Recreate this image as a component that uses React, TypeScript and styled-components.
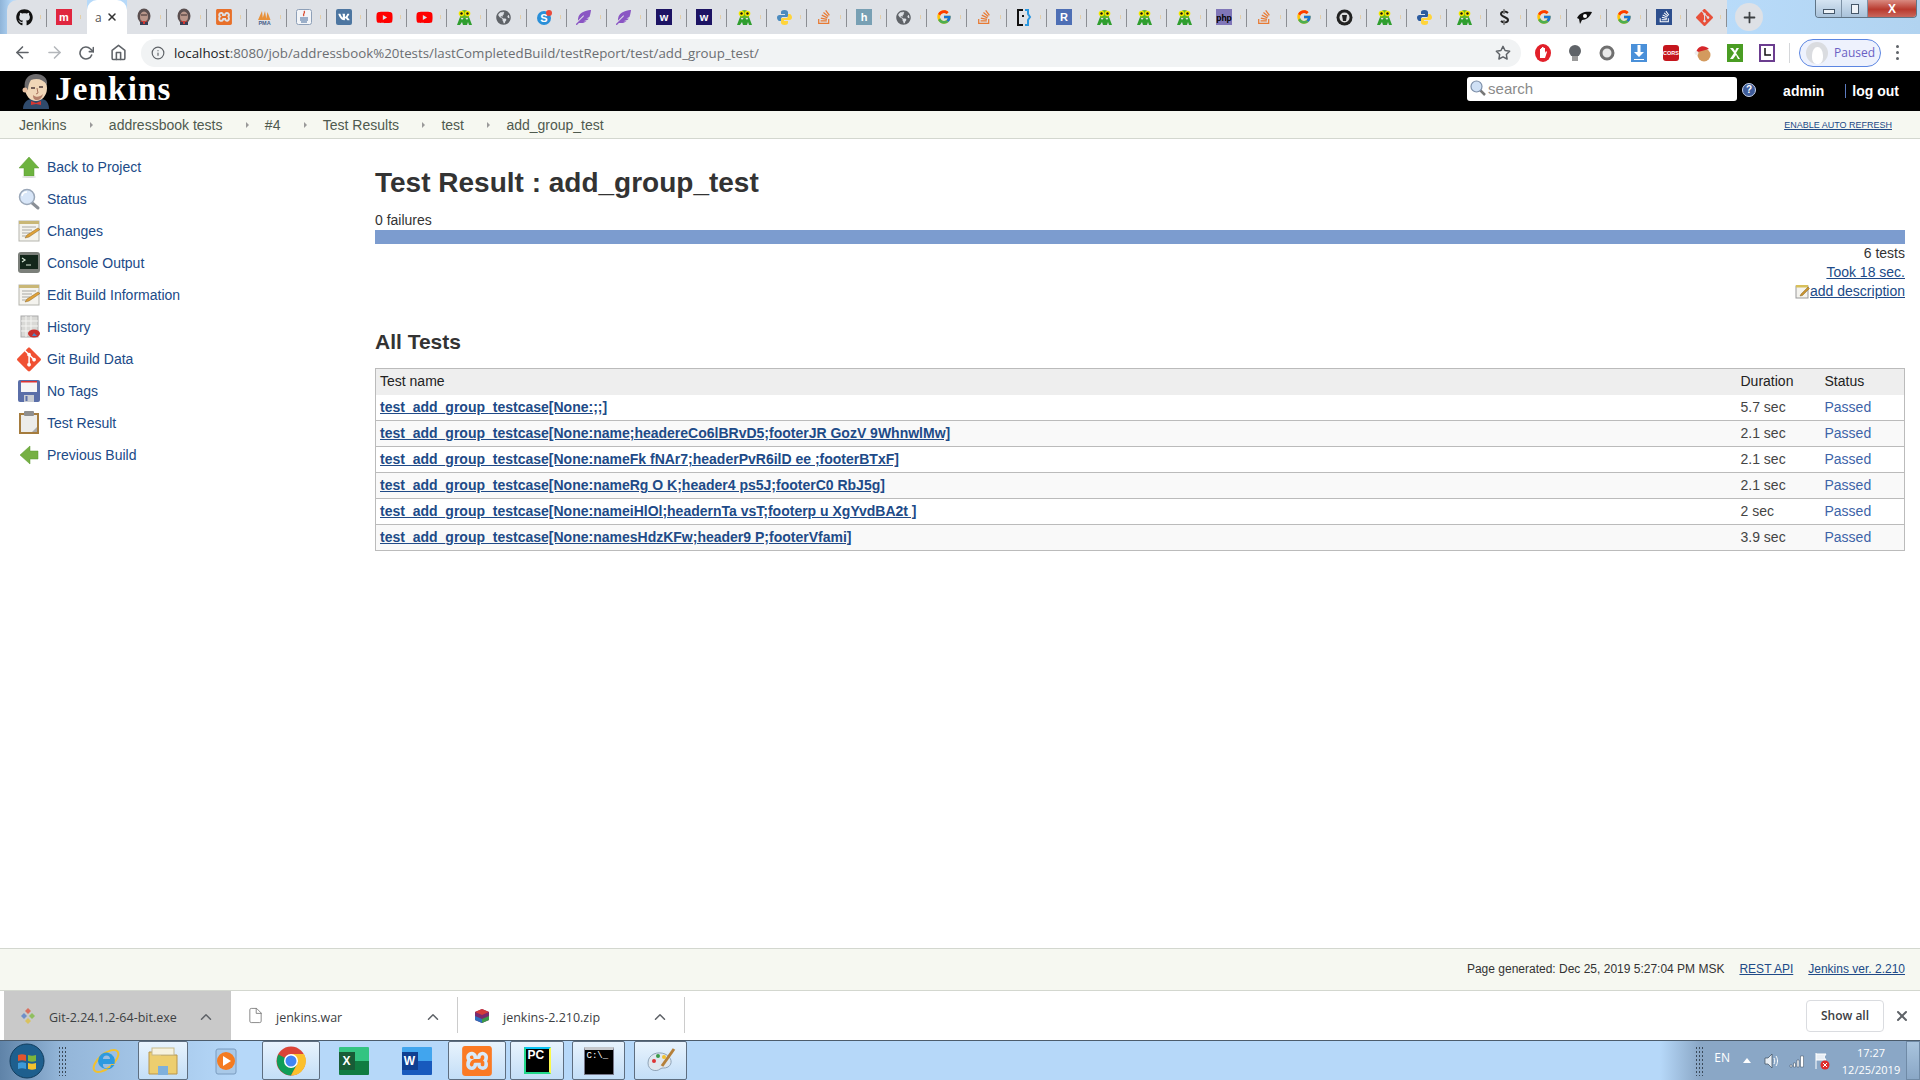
import React from 'react';
import styled, { createGlobalStyle } from 'styled-components';
import { FaGithub, FaVk, FaYoutube, FaStackOverflow, FaGlobeAmericas, FaFeatherAlt } from 'react-icons/fa';
import { FcGoogle } from 'react-icons/fc';
import { SiGit, SiXampp } from 'react-icons/si';
import { FiArrowLeft, FiArrowRight, FiRotateCw, FiHome, FiInfo, FiStar, FiX, FiChevronUp, FiPlus, FiFile } from 'react-icons/fi';

const GlobalStyle = createGlobalStyle`
  html, body {
    margin: 0;
    padding: 0;
    background: #fff;
  }
  body {
    font-family: "Liberation Sans", Arial, sans-serif;
    font-size: 14px;
    color: #333;
  }
  * { box-sizing: border-box; }
`;

const Screen = styled.div`
  width: 1920px;
  height: 1080px;
  display: flex;
  flex-direction: column;
  overflow: hidden;
`;

// Browser chrome
const TabStrip = styled.div`
  height: 34px;
  flex: none;
  display: flex;
  padding-left: 7px;
  background: linear-gradient(90deg, #8fb4d8 0, #b6d9f9 12px, #b9dcfb 1700px, #b1d3f0 100%);
`;

const Tab = styled.div<{ $active?: boolean }>`
  position: relative;
  width: 40px;
  height: 34px;
  flex: none;
  display: flex;
  align-items: center;
  padding-left: ${p => (p.$active ? '8px' : '9px')};
  background: ${p => (p.$active ? '#fff' : '#dee1e6')};
  border-radius: ${p => (p.$active ? '10px 10px 0 0' : '0')};
  font-family: "Open Sans", sans-serif;
  font-size: 12px;
  color: #555;

  &:first-child { border-radius: 10px 0 0 0; }

  &:not(:first-child):last-of-type { border-radius: 0 10px 0 0; }
`;

const TabDivider = styled.span`
  position: absolute;
  right: 0;
  top: 9px;
  width: 1px;
  height: 18px;
  background: #8b8e93;
`;

const TabFade = styled.span`
  position: absolute;
  left: 33px;
  top: 15px;
  width: 1px;
  height: 4px;
  background: #e3cfa8;
`;

const TabClose = styled.span`
  display: flex;
  margin-left: 4px;
  color: #333;
`;

const NewTab = styled.div`
  width: 28px;
  height: 28px;
  margin: 3px 0 0 8px;
  border-radius: 50%;
  background: #dee1e6;
  display: flex;
  align-items: center;
  justify-content: center;
  color: #3c4043;
`;

const WindowControls = styled.div`
  margin-left: auto;
  margin-right: 3px;
  width: 102px;
  height: 18px;
  display: flex;
  border: 1px solid #5f7486;
  border-top: none;
  border-radius: 0 0 4px 4px;
  overflow: hidden;
`;

const WindowButton = styled.div<{ $close?: boolean; $w: number }>`
  width: ${p => p.$w}px;
  display: flex;
  align-items: center;
  justify-content: center;
  color: ${p => (p.$close ? '#fff' : '#39485a')};
  background: ${p => (p.$close ? 'linear-gradient(#d98a80, #b93a2e 55%, #c9675c)' : 'linear-gradient(#d5e4f2, #a9c2da)')};
  border-right: 1px solid #7d91a5;
  font-size: 12px;
  font-weight: 700;

  &:last-child { border-right: none; }
`;

const MinGlyph = styled.span`
  width: 12px;
  height: 5px;
  margin-top: 5px;
  background: #eef3f8;
  border: 1px solid #46586a;
`;

const RestoreGlyph = styled.span`
  position: relative;
  width: 8px;
  height: 10px;
  background: #eef3f8;
  border: 1px solid #46586a;

  &::before {
    content: '';
    position: absolute;
    left: 1px;
    top: -3px;
    width: 8px;
    height: 9px;
    border: 1px solid #46586a;
    z-index: -1;
  }
`;

const Toolbar = styled.div`
  height: 37px;
  flex: none;
  display: flex;
  align-items: center;
  background: #fff;
  position: relative;
`;

const NavButton = styled.div<{ $muted?: boolean; $w: number }>`
  width: ${p => p.$w}px;
  flex: none;
  display: flex;
  justify-content: center;
  color: ${p => (p.$muted ? '#b4b7bb' : '#5f6368')};
`;

const Omnibox = styled.div`
  width: 1380px;
  height: 28px;
  margin-left: 13px;
  flex: none;
  display: flex;
  align-items: center;
  padding: 0 10px 0 10px;
  background: #f1f3f4;
  border-radius: 14px;
  color: #5f6368;
`;

const UrlText = styled.span`
  margin-left: 9px;
  font-family: "Open Sans", sans-serif;
  font-size: 13.3px;
  color: #6b6e72;

  b {
    font-weight: 400;
    color: #202124;
  }
`;

const StarSlot = styled.span`
  margin-left: auto;
  display: flex;
  color: #5f6368;
`;

const Extensions = styled.div`
  display: flex;
  margin-left: 6px;
  flex: none;
`;

const ExtSlot = styled.div`
  width: 32px;
  display: flex;
  justify-content: center;
  align-items: center;
`;

const CorsBadge = styled.div`
  width: 16px;
  height: 16px;
  border-radius: 3px;
  background: #c5161d;
  color: #fff;
  font-size: 5.5px;
  font-weight: 700;
  display: flex;
  align-items: center;
  justify-content: center;
`;

const ToolbarSep = styled.div`
  width: 1px;
  height: 20px;
  background: #d5d7da;
  margin-left: 6px;
`;

const ProfilePill = styled.div`
  width: 82px;
  height: 28px;
  margin-left: 9px;
  border: 1px solid #5c86e2;
  border-radius: 14px;
  background: #eef2fd;
  display: flex;
  align-items: center;
  padding-left: 6px;
  font-family: "Open Sans", sans-serif;
  font-size: 12px;
  color: #6b61c4;
`;

const Avatar = styled.div`
  width: 22px;
  height: 22px;
  border-radius: 50%;
  background: #dadce0;
  margin-right: 6px;
  display: flex;
  justify-content: center;
  align-items: flex-end;

  &::after {
    content: '';
    width: 11px;
    height: 17px;
    border-radius: 50% 50% 40% 40%;
    background: #fff;
  }
`;

const MenuDots = styled.div`
  margin-left: 15px;
  display: flex;
  flex-direction: column;
  gap: 3px;

  span {
    width: 3px;
    height: 3px;
    border-radius: 50%;
    background: #5f6368;
  }
`;

// Jenkins page
const PageHeader = styled.header`
  height: 40px;
  flex: none;
  display: flex;
  align-items: center;
  background: #000;
  color: #fff;
  padding-left: 18px;
`;

const Logo = styled.div`
  display: flex;
  align-items: center;
  height: 40px;
`;

const LogoText = styled.span`
  font-family: "Liberation Serif", serif;
  font-weight: 700;
  font-size: 33px;
  margin-left: 1px;
  margin-top: -3px;
  letter-spacing: 1.2px;
`;

const SearchBox = styled.div`
  margin-left: auto;
  width: 270px;
  height: 24px;
  background: #fff;
  border-radius: 3px;
  display: flex;
  align-items: center;
  padding: 0 0 2px 3px;
  margin-top: -4px;
  color: #8a8a8a;
  font-size: 15px;
  gap: 2px;
`;

const HelpDot = styled.div`
  width: 14px;
  height: 14px;
  margin-left: 5px;
  margin-top: -3px;
  border-radius: 50%;
  background: #3e5c9a;
  border: 1px solid #c9d4ea;
  color: #fff;
  font-size: 10px;
  font-weight: 700;
  display: flex;
  align-items: center;
  justify-content: center;
`;

const HeaderLink = styled.span`
  font-weight: 700;
  font-size: 14px;
  color: #fff;
`;

const AdminLink = styled(HeaderLink)`
  margin-left: 27px;
`;

const LogoutBar = styled.span`
  display: flex;
  align-items: center;
  margin: 0 21px 0 21px;
  gap: 6px;

  &::before {
    content: '';
    width: 1px;
    height: 14px;
    background: #5c7bc0;
  }
`;

const Breadcrumbs = styled.nav`
  height: 28px;
  flex: none;
  display: flex;
  align-items: center;
  padding: 0 28px 0 19px;
  background: #f6f8f1;
  border-bottom: 1px solid #d3d7cf;
  color: #4f5a4f;
`;

const Crumb = styled.span`
  display: flex;
  align-items: center;
`;

const CrumbArrow = styled.span`
  width: 0;
  height: 0;
  margin: 0 16.2px 0 23.2px;
  border-left: 3px solid #9a9a9a;
  border-top: 3px solid transparent;
  border-bottom: 3px solid transparent;
`;

const AutoRefresh = styled.a`
  margin-left: auto;
  color: #204a87;
  font-size: 9px;
  text-decoration: underline;
  text-transform: uppercase;
`;

const Main = styled.div`
  flex: 1;
  display: flex;
  min-height: 0;
`;

const Sidebar = styled.aside`
  width: 375px;
  flex: none;
  padding: 12px 0 0 17px;
`;

const SideItem = styled.a`
  height: 32px;
  display: flex;
  align-items: center;
  gap: 6px;
  color: #204a87;
`;

const SideIcon = styled.span`
  width: 24px;
  height: 24px;
  display: flex;
  align-items: center;
  justify-content: center;
`;

const Content = styled.main`
  flex: 1;
  min-width: 0;
  padding: 0 15px 0 0;
`;

const Title = styled.h1`
  margin: 26px 0 0;
  font-size: 28px;
  line-height: 36px;
  font-weight: 700;
  color: #333;
`;

const FailCount = styled.div`
  margin-top: 11px;
  line-height: 16px;
  height: 18px;
`;

const ProgressBar = styled.div`
  height: 14px;
  background: #7c9ccf;
`;

const Summary = styled.div`
  margin-top: 0;
  display: flex;
  flex-direction: column;
  align-items: flex-end;
`;

const SummaryLine = styled.div`
  height: 19px;
  line-height: 19px;
  display: flex;
  align-items: center;
`;

const Link = styled.a`
  color: #204a87;
  text-decoration: underline;
`;

const SectionTitle = styled.h2`
  margin: 28px 0 0;
  font-size: 21px;
  line-height: 26px;
  font-weight: 700;
  color: #333;
`;

const TestTable = styled.table`
  width: 100%;
  margin-top: 13px;
  border-collapse: collapse;
  border: 1px solid #bbb;
  table-layout: fixed;

  th {
    background: #eee;
    font-weight: 400;
    text-align: left;
    color: #222;
    height: 26px;
    padding: 0 4px 1px;
  }

  td {
    height: 26px;
    padding: 0 4px 1px;
    border-bottom: 1px solid #bbb;
    color: #444;
  }

  tbody tr:nth-child(even) td { background: #f9f9f9; }
`;

const DurationCol = styled.col`
  width: 84px;
`;

const StatusCol = styled.col`
  width: 84px;
`;

const TestLink = styled.a`
  font-weight: 700;
  color: #204a87;
  text-decoration: underline;
`;

const Passed = styled.span`
  color: #3d64a8;
`;

const PageFooter = styled.footer`
  height: 43px;
  flex: none;
  display: flex;
  align-items: center;
  justify-content: flex-end;
  gap: 15px;
  padding: 0 15px 2px 0;
  background: #f6f8f1;
  border-top: 1px solid #d3d7cf;
  border-bottom: 1px solid #d3d7cf;
  font-size: 12px;
`;

// Downloads shelf
const Shelf = styled.div`
  height: 49px;
  flex: none;
  display: flex;
  align-items: stretch;
  padding-left: 4px;
  background: #fff;
`;

const DownloadItem = styled.div<{ $hover?: boolean }>`
  width: 227px;
  display: flex;
  align-items: center;
  padding: 3px 16px 0 15px;
  gap: 12px;
  position: relative;
  background: ${p => (p.$hover ? '#c9c9c9' : 'transparent')};
  font-family: "Open Sans", sans-serif;
  font-size: 12.5px;
  color: #3c4043;

  &:not(:first-child)::after {
    content: '';
    position: absolute;
    right: 0;
    top: 6px;
    bottom: 7px;
    width: 1px;
    background: #ccc;
  }
`;

const DownloadIcon = styled.span`
  width: 18px;
  margin-top: -3px;
  display: flex;
  justify-content: center;
`;

const Chevron = styled.span`
  margin-left: auto;
  display: flex;
  color: #5f6368;
`;

const ShelfRight = styled.div`
  margin-left: auto;
  display: flex;
  align-items: center;
  padding-right: 10px;
`;

const ShowAll = styled.button`
  width: 78px;
  height: 32px;
  background: #fff;
  border: 1px solid #dadce0;
  border-radius: 4px;
  font-family: "Open Sans", sans-serif;
  font-size: 12px;
  font-weight: 600;
  color: #3c4043;
`;

const ShelfClose = styled.span`
  display: flex;
  margin-left: 10px;
  color: #5f6368;
`;

// Windows taskbar
const Taskbar = styled.div`
  height: 40px;
  flex: none;
  display: flex;
  align-items: stretch;
  border-top: 1px solid #4c5c6c;
  background: linear-gradient(90deg, #5f83a8 0, #93b5d8 60px, #b6d8f9 240px, #b6d8f9 1660px, #8aa7c6 1700px, #8aa7c6 100%);
`;

const TaskItem = styled.div<{ $active?: boolean; $w: number; $ml?: number; $pl?: number }>`
  width: ${p => p.$w}px;
  margin-left: ${p => p.$ml || 0}px;
  padding-left: ${p => p.$pl || 0}px;
  flex: none;
  display: flex;
  align-items: center;
  justify-content: center;
  border-radius: 2px;
  border: ${p => (p.$active ? '1px solid #5e6e80' : '1px solid transparent')};
  background: ${p => (p.$active ? 'linear-gradient(#e8f3fd, #c3def7)' : 'transparent')};
`;

const Gripper = styled.div<{ $ml: number }>`
  width: 8px;
  height: 30px;
  align-self: center;
  flex: none;
  margin-left: ${p => p.$ml}px;
  background-image: radial-gradient(#3b4a5a 1px, transparent 1px);
  background-size: 3px 4px;
`;

const PyCharmBadge = styled.div`
  width: 27px;
  height: 27px;
  background: #000;
  border: 2px solid #21d789;
  border-right-color: #fcf84a;
  border-top-color: #07c3f2;
  color: #fff;
  font-size: 12px;
  font-weight: 700;
  line-height: 13px;
  padding-left: 2px;
`;

const CmdBadge = styled.div`
  width: 30px;
  height: 28px;
  background: #000;
  border: 1px solid #778;
  border-top: 3px solid #c6c8cc;
  color: #fff;
  font-family: "Liberation Mono", monospace;
  font-size: 9px;
  line-height: 12px;
  padding-left: 2px;
`;

const OfficeText = styled.div<{ $bg: string }>`
  width: 16px;
  height: 18px;
  background: ${p => p.$bg};
  color: #fff;
  font-size: 12px;
  font-weight: 700;
  text-align: center;
  line-height: 18px;
`;

const OfficeIcon = styled.div<{ $a: string; $b: string }>`
  width: 30px;
  height: 28px;
  display: flex;
  align-items: center;
  background: linear-gradient(${p => p.$a} 50%, ${p => p.$b} 50%);
  margin-left: 3px;
  border-radius: 1px;
`;

const Tray = styled.div`
  margin-left: auto;
  display: flex;
  align-items: center;
  color: #fff;
  font-family: "Open Sans", sans-serif;
  font-size: 11px;
`;

const TrayLang = styled.span`
  margin: -6px 4px 0 11px;
  font-size: 12px;
`;

const TrayIcon = styled.span`
  width: 25px;
  display: flex;
  justify-content: center;
`;

const Clock = styled.div`
  width: 68px;
  margin-left: 3px;
  text-align: center;
  font-size: 11px;
  line-height: 17px;
`;

const ShowDesktop = styled.div`
  width: 14px;
  height: 100%;
  margin-left: 1px;
  border: 1px solid #6f8aa6;
  background: linear-gradient(#a9c4de, #8aa7c6);
`;

// Icons
const Mantis = () => (
  <svg width="17" height="17" viewBox="0 0 17 17">
    <path d="M1 16 4 8l2 3 2.500-3 2.500 3 2-3 3 8h-3l-1-3-1 3H7l-1-3-2 3z" fill="#2f9e2f" />
    <path d="M4 5a4.500 4 0 0 1 9 0v4H4z" fill="#63b52e" />
    <circle cx="5.500" cy="4.500" r="2.800" fill="#f2e600" />
    <circle cx="11.500" cy="4.500" r="2.800" fill="#f2e600" />
    <circle cx="5.500" cy="4.500" r="1.200" fill="#111" />
    <circle cx="11.500" cy="4.500" r="1.200" fill="#111" />
  </svg>
);

const Butler = ({ size }: { size: number }) => (
  <svg width={size} height={size} viewBox="0 0 32 36">
    <path d="M3 36c0-6 4-10 9-10h9c5 0 8 4 8 10z" fill="#2f4a6b" />
    <path d="M11 28l5 2 5-2v4l-5-1-5 1z" fill="#d33833" />
    <ellipse cx="16" cy="15" rx="11" ry="13" fill="#f0d6b7" />
    <path d="M5 16C3 6 9 1 16 1s12 4 11 11c-4-6-10-7-16-5-2 3-3 6-3 10z" fill="#6d6b6d" />
    <path d="M13 22c3 3 7 2 10-1-1 4-3 6-6 6s-4-2-4-5z" fill="#b5806a" />
    <path d="M11 15h4M19 14h4" stroke="#49393a" strokeWidth="1.500" />
    <path d="M17 15l1 5-2 1" stroke="#a8745f" fill="none" />
    <circle cx="5" cy="17" r="2.500" fill="#e8bfa0" />
  </svg>
);

const JenkinsFavicon = () => (
  <svg width="16" height="18" viewBox="0 0 16 18">
    <ellipse cx="8" cy="8" rx="6.500" ry="7.500" fill="#5b4f50" />
    <ellipse cx="8" cy="9" rx="4" ry="5.500" fill="#b9968a" />
    <path d="M5 7h6" stroke="#3a2d2e" />
    <path d="M5 12c1 2 5 2 6 0v2H5z" fill="#a8332e" />
    <rect x="4" y="14" width="8" height="3" fill="#3a3f55" />
    <rect x="7" y="13" width="2" height="3" fill="#d33833" />
  </svg>
);

const Python = ({ dark }: { dark?: boolean }) => (
  <svg width="17" height="17" viewBox="0 0 17 17">
    <path d="M8.500 1C5.500 1 5 2 5 3.500V5h4v1H3.500C2 6 1 7 1 8.500S2 12 3.500 12H5v-2c0-1.500 1-2 2-2h3.500c1 0 1.500-.5 1.500-1.500v-3C12 2 11 1 8.500 1z" fill={dark ? '#2b5b9e' : '#4b8bbe'} />
    <path d="M8.500 16c3 0 3.500-1 3.500-2.500V12H8v-1h5.500c1.500 0 2.500-1 2.500-2.500S15 5 13.500 5H12v2c0 1.500-1 2-2 2H6.500C5.500 9 5 9.500 5 10.500v3C5 15 6 16 8.500 16z" fill="#ffd43b" />
  </svg>
);

const Square = ({ bg, label, color = '#fff', size = 11 }: { bg: string; label: string; color?: string; size?: number }) => (
  <svg width="16" height="16" viewBox="0 0 16 16">
    <rect width="16" height="16" fill={bg} />
    <text x="8" y="12" fontSize={size} fontWeight="700" textAnchor="middle" fontFamily="Liberation Sans" fill={color}>
      {label}
    </text>
  </svg>
);

const Favicon = ({ kind }: { kind: string }) => {
  switch (kind) {
    case 'github':
      return <FaGithub size={17} color="#111" />;
    case 'm':
      return <Square bg="#e0263f" label="m" />;
    case 'jenkins':
      return <JenkinsFavicon />;
    case 'xampp':
      return <SiXampp size={16} color="#e8702a" />;
    case 'pma':
      return (
        <svg width="17" height="17" viewBox="0 0 17 17">
          <path d="M2 11 6 2l1 9zM6 11l3-9 1.500 9zM10 11l1.500-8 3 8z" fill="#e8913a" />
          <text x="8.500" y="16" fontSize="5.500" fontWeight="700" textAnchor="middle" fill="#47608a" fontFamily="Liberation Sans">PMA</text>
        </svg>
      );
    case 'java':
      return (
        <svg width="16" height="16" viewBox="0 0 16 16">
          <rect x=".5" y=".5" width="15" height="15" rx="2" fill="#f3f5f8" stroke="#8ea0b8" />
          <path d="M8 2c2 2-2 3 0 5" stroke="#d9472b" strokeWidth="1.300" fill="none" />
          <path d="M4 9h8M4 11h8M5 13h6" stroke="#456a9a" strokeWidth="1.200" />
        </svg>
      );
    case 'vk':
      return (
        <svg width="16" height="16" viewBox="0 0 16 16">
          <rect width="16" height="16" rx="2" fill="#4d76a1" />
          <FaVk x="2" y="2" size={12} color="#fff" />
        </svg>
      );
    case 'yt':
      return <FaYoutube size={17} color="#f00" />;
    case 'mantis':
      return <Mantis />;
    case 'globe':
      return <FaGlobeAmericas size={15} color="#5f6368" />;
    case 's':
      return (
        <svg width="17" height="17" viewBox="0 0 17 17">
          <circle cx="8" cy="9" r="7" fill="#2a8fd8" />
          <circle cx="13" cy="4" r="3" fill="#e9493b" />
          <text x="8" y="13" fontSize="11" fontWeight="700" textAnchor="middle" fill="#fff" fontFamily="Liberation Sans">S</text>
        </svg>
      );
    case 'feather':
      return <FaFeatherAlt size={15} color="#8a55c4" />;
    case 'w':
      return <Square bg="#1d1464" label="w" />;
    case 'python':
      return <Python />;
    case 'python2':
      return <Python dark />;
    case 'so':
      return <FaStackOverflow size={16} color="#e87a33" />;
    case 'h':
      return <Square bg="#78a0b4" label="h" />;
    case 'g':
      return <FcGoogle size={16} />;
    case 'bracket':
      return (
        <svg width="16" height="17" viewBox="0 0 16 17">
          <path d="M7 1H2v15h5" stroke="#111" strokeWidth="2" fill="none" />
          <path d="M9 1h3v4l2 3-2 3v5H9" stroke="#2a97e0" strokeWidth="2" fill="none" />
          <rect x="6" y="6" width="2" height="2" fill="#111" />
        </svg>
      );
    case 'r':
      return <Square bg="#4e6fb5" label="R" />;
    case 'php':
      return <Square bg="#8076b8" label="php" color="#000" size={8.5} />;
    case 'lion':
      return (
        <svg width="17" height="17" viewBox="0 0 17 17">
          <circle cx="8.500" cy="8.500" r="8" fill="#222" />
          <circle cx="8.500" cy="8.500" r="5" fill="#ddd" />
          <path d="M6 6h5l-1 6H7z" fill="#222" />
        </svg>
      );
    case 'dollar':
      return (
        <svg width="16" height="16" viewBox="0 0 16 16">
          <path d="M12 4c-2-2-7-2-7 1s7 3 7 6-5 3-7 1" stroke="#222" strokeWidth="2" fill="none" />
          <path d="M8 0v5M8 11v5" stroke="#777" strokeWidth="1.500" />
        </svg>
      );
    case 'eye':
      return (
        <svg width="17" height="17" viewBox="0 0 17 17">
          <path d="M1 9c3-6 9-7 15-6-2 5-6 8-10 8l-2 4-1-5z" fill="#111" />
          <circle cx="9" cy="7" r="2" fill="#fff" />
        </svg>
      );
    case 'so2':
      return (
        <svg width="16" height="16" viewBox="0 0 16 16">
          <rect width="16" height="16" fill="#2d4f8e" />
          <FaStackOverflow x="2" y="1" size={13} color="#fff" />
        </svg>
      );
    case 'git':
      return <SiGit size={17} color="#e8503a" />;
    default:
      return null;
  }
};

const tabs = [
  'github', 'm', 'active', 'jenkins', 'jenkins', 'xampp', 'pma', 'java', 'vk', 'yt', 'yt', 'mantis', 'globe', 's',
  'feather', 'feather', 'w', 'w', 'mantis', 'python', 'so', 'h', 'globe', 'g', 'so', 'bracket', 'r', 'mantis',
  'mantis', 'mantis', 'php', 'so', 'g', 'lion', 'mantis', 'python2', 'mantis', 'dollar', 'g', 'eye', 'g', 'so2', 'git',
];

const Notepad = () => (
  <svg width="24" height="24" viewBox="0 0 24 24">
    <rect x="2" y="2" width="20" height="20" fill="#f4f3ee" stroke="#b5b5ae" />
    <rect x="2" y="2" width="20" height="3" fill="#c9b776" />
    <path d="M5 8h14M5 11h10M5 14h8M5 17h6" stroke="#a9a9a4" />
    <path d="M8 19l2-3L21 9l2 1.500L12 18z" fill="#e0a23a" stroke="#8a6420" strokeWidth=".5" />
  </svg>
);

const sideItems: { label: string; icon: React.ReactNode }[] = [
  {
    label: 'Back to Project',
    icon: (
      <svg width="24" height="24" viewBox="0 0 24 24">
        <path d="M12 2 22 13h-5v8H7v-8H2z" fill="#6db33f" stroke="#5a9a30" strokeWidth=".5" />
        <ellipse cx="12" cy="22" rx="7" ry="1" fill="#ddd" />
      </svg>
    ),
  },
  {
    label: 'Status',
    icon: (
      <svg width="24" height="24" viewBox="0 0 24 24">
        <path d="M14 15l7 6" stroke="#8a8f96" strokeWidth="3" strokeLinecap="round" />
        <circle cx="10" cy="10" r="7.500" fill="#d8e6f8" stroke="#9aa7b8" strokeWidth="1.500" />
        <path d="M5 9a5 5 0 0 1 5-4" stroke="#fff" strokeWidth="1.500" fill="none" />
      </svg>
    ),
  },
  { label: 'Changes', icon: <Notepad /> },
  {
    label: 'Console Output',
    icon: (
      <svg width="24" height="24" viewBox="0 0 24 24">
        <rect x="1" y="1" width="22" height="21" rx="3" fill="#7b7f7a" />
        <rect x="3" y="4" width="18" height="14" fill="#12261a" />
        <path d="M5 7l3 2-3 2M9 14h5" stroke="#d8e8d8" strokeWidth="1.200" fill="none" />
      </svg>
    ),
  },
  { label: 'Edit Build Information', icon: <Notepad /> },
  {
    label: 'History',
    icon: (
      <svg width="24" height="24" viewBox="0 0 24 24">
        <rect x="4" y="1" width="17" height="21" fill="#d9d9d6" stroke="#aaa" />
        <path d="M9 1v21M14 1v14M4 6h17M4 11h17M4 16h8" stroke="#f4f4f2" />
        <ellipse cx="17" cy="18.500" rx="6" ry="4" fill="#c9302c" />
        <path d="M17 18l3 3h-5z" fill="#4d8ac9" />
      </svg>
    ),
  },
  { label: 'Git Build Data', icon: <SiGit size={25} color="#f05133" /> },
  {
    label: 'No Tags',
    icon: (
      <svg width="24" height="24" viewBox="0 0 24 24">
        <rect x="1" y="1" width="22" height="22" rx="2" fill="#5a6ea8" />
        <rect x="4" y="2" width="16" height="11" fill="#f6f6f6" />
        <rect x="4" y="2" width="16" height="1.500" fill="#d33" />
        <rect x="7" y="16" width="10" height="7" fill="#c9ccd2" />
        <rect x="8.500" y="17" width="2" height="5" fill="#5a6ea8" />
      </svg>
    ),
  },
  {
    label: 'Test Result',
    icon: (
      <svg width="24" height="24" viewBox="0 0 24 24">
        <rect x="2" y="2" width="20" height="21" fill="#a57c3e" />
        <rect x="4" y="4" width="16" height="17" fill="#ececea" />
        <rect x="7" y="0" width="10" height="5" rx="1" fill="#8f8f8f" />
        <path d="M15 21l5-5v5z" fill="#aaa" />
      </svg>
    ),
  },
  {
    label: 'Previous Build',
    icon: (
      <svg width="24" height="24" viewBox="0 0 24 24">
        <path d="M3 12 13 3v5h8v8h-8v5z" fill="#76b043" stroke="#5a9a30" strokeWidth=".5" />
      </svg>
    ),
  },
];

const tests: [string, string][] = [
  ['test_add_group_testcase[None:;;]', '5.7 sec'],
  ['test_add_group_testcase[None:name;headereCo6lBRvD5;footerJR GozV 9WhnwlMw]', '2.1 sec'],
  ['test_add_group_testcase[None:nameFk fNAr7;headerPvR6ilD ee ;footerBTxF]', '2.1 sec'],
  ['test_add_group_testcase[None:nameRg O K;header4 ps5J;footerC0 RbJ5g]', '2.1 sec'],
  ['test_add_group_testcase[None:nameiHlOl;headernTa vsT;footerp u XgYvdBA2t ]', '2 sec'],
  ['test_add_group_testcase[None:namesHdzKFw;header9 P;footerVfami]', '3.9 sec'],
];

const crumbs = ['Jenkins', 'addressbook tests', '#4', 'Test Results', 'test', 'add_group_test'];

export default function App() {
  return (
    <Screen>
      <GlobalStyle />

      <TabStrip>
        {tabs.map((kind, i) =>
          kind === 'active' ? (
            <Tab key={i} $active>
              a
              <TabClose>
                <FiX size={12} strokeWidth={3} />
              </TabClose>
            </Tab>
          ) : (
            <Tab key={i}>
              <Favicon kind={kind} />
              <TabFade />
              {tabs[i + 1] !== 'active' && <TabDivider />}
            </Tab>
          )
        )}
        <NewTab>
          <FiPlus size={17} strokeWidth={2.5} />
        </NewTab>
        <WindowControls>
          <WindowButton $w={27}>
            <MinGlyph />
          </WindowButton>
          <WindowButton $w={26}>
            <RestoreGlyph />
          </WindowButton>
          <WindowButton $w={49} $close>
            X
          </WindowButton>
        </WindowControls>
      </TabStrip>

      <Toolbar>
        <NavButton $w={44}>
          <FiArrowLeft size={19} />
        </NavButton>
        <NavButton $w={20} $muted>
          <FiArrowRight size={19} />
        </NavButton>
        <NavButton $w={44}>
          <FiRotateCw size={16} strokeWidth={2.4} />
        </NavButton>
        <NavButton $w={20}>
          <FiHome size={17} strokeWidth={2.2} />
        </NavButton>
        <Omnibox>
          <FiInfo size={14} />
          <UrlText>
            <b>localhost</b>:8080/job/addressbook%20tests/lastCompletedBuild/testReport/test/add_group_test/
          </UrlText>
          <StarSlot>
            <FiStar size={16} strokeWidth={2.2} />
          </StarSlot>
        </Omnibox>
        <Extensions>
          <ExtSlot>
            <svg width="16" height="18" viewBox="0 0 16 18">
              <ellipse cx="8" cy="9" rx="8" ry="9" fill="#e2202a" />
              <path d="M5 14V5h1v3-4h1v4-5h1.500v5-4H10v5l1-2 1 1-2 6z" fill="#fff" />
            </svg>
          </ExtSlot>
          <ExtSlot>
            <svg width="14" height="18" viewBox="0 0 14 18">
              <circle cx="7" cy="7" r="6" fill="#5f6368" />
              <rect x="4" y="12" width="6" height="5" fill="#9a9a9a" />
            </svg>
          </ExtSlot>
          <ExtSlot>
            <svg width="16" height="16" viewBox="0 0 16 16">
              <circle cx="8" cy="8" r="6" fill="#e8e8e8" stroke="#6f6f6f" strokeWidth="3" />
            </svg>
          </ExtSlot>
          <ExtSlot>
            <svg width="16" height="18" viewBox="0 0 16 18">
              <rect width="16" height="18" fill="#4a90d9" />
              <path d="M6.500 1h3v7H13l-5 5-5-5h3.500zM3 15h10v1H3z" fill="#fff" />
            </svg>
          </ExtSlot>
          <ExtSlot>
            <CorsBadge>CORS</CorsBadge>
          </ExtSlot>
          <ExtSlot>
            <svg width="18" height="18" viewBox="0 0 18 18">
              <circle cx="10" cy="11" r="6.500" fill="#d39a5e" />
              <path d="M2 9C3 2 10 0 15 5L4 8z" fill="#d6262b" />
              <circle cx="2.500" cy="9" r="2" fill="#eee" />
            </svg>
          </ExtSlot>
          <ExtSlot>
            <svg width="16" height="18" viewBox="0 0 16 18">
              <rect width="16" height="18" fill="#4a9d23" />
              <path d="M3 4l4 5-4 6h3l3-4 2 4h2L9 9l3-5H9.500L8 7 6 4z" fill="#fff" />
            </svg>
          </ExtSlot>
          <ExtSlot>
            <svg width="16" height="18" viewBox="0 0 16 18">
              <rect x="1" y="1" width="14" height="16" fill="#fff" stroke="#6b3d8f" strokeWidth="2" />
              <path d="M6 4v7h6" stroke="#111" strokeWidth="1.500" fill="none" />
            </svg>
          </ExtSlot>
        </Extensions>
        <ToolbarSep />
        <ProfilePill>
          <Avatar />
          Paused
        </ProfilePill>
        <MenuDots>
          <span />
          <span />
          <span />
        </MenuDots>
      </Toolbar>

      <PageHeader>
        <Logo>
          <Butler size={36} />
          <LogoText>Jenkins</LogoText>
        </Logo>
        <SearchBox>
          <svg width="16" height="16" viewBox="0 0 16 16">
            <path d="M10 10l5 5" stroke="#777" strokeWidth="2.500" />
            <circle cx="6.500" cy="6.500" r="5.500" fill="#cfe0f5" stroke="#7d8fa8" strokeWidth="1.200" />
          </svg>
          search
        </SearchBox>
        <HelpDot>?</HelpDot>
        <AdminLink>admin</AdminLink>
        <LogoutBar>
          <HeaderLink>log out</HeaderLink>
        </LogoutBar>
      </PageHeader>

      <Breadcrumbs>
        {crumbs.map((c, i) => (
          <Crumb key={c}>
            {c}
            {i < crumbs.length - 1 && <CrumbArrow />}
          </Crumb>
        ))}
        <AutoRefresh>Enable auto refresh</AutoRefresh>
      </Breadcrumbs>

      <Main>
        <Sidebar>
          {sideItems.map(item => (
            <SideItem key={item.label}>
              <SideIcon>{item.icon}</SideIcon>
              {item.label}
            </SideItem>
          ))}
        </Sidebar>

        <Content>
          <Title>Test Result : add_group_test</Title>
          <FailCount>0 failures</FailCount>
          <ProgressBar />
          <Summary>
            <SummaryLine>6 tests</SummaryLine>
            <SummaryLine>
              <Link>Took 18 sec.</Link>
            </SummaryLine>
            <SummaryLine>
              <svg width="15" height="15" viewBox="0 0 15 15">
                <rect x="1" y="2" width="12" height="12" fill="#f4f3ee" stroke="#999" />
                <rect x="1" y="1" width="12" height="2.500" fill="#d8c05a" />
                <path d="M5 12l1-2 7-7 1.500 1.500-7 7z" fill="#c9932e" stroke="#6e5318" strokeWidth=".4" />
              </svg>
              <Link>add description</Link>
            </SummaryLine>
          </Summary>

          <SectionTitle>All Tests</SectionTitle>
          <TestTable>
            <colgroup>
              <col />
              <DurationCol />
              <StatusCol />
            </colgroup>
            <thead>
              <tr>
                <th>Test name</th>
                <th>Duration</th>
                <th>Status</th>
              </tr>
            </thead>
            <tbody>
              {tests.map(([name, duration]) => (
                <tr key={name}>
                  <td>
                    <TestLink>{name}</TestLink>
                  </td>
                  <td>{duration}</td>
                  <td>
                    <Passed>Passed</Passed>
                  </td>
                </tr>
              ))}
            </tbody>
          </TestTable>
        </Content>
      </Main>

      <PageFooter>
        <span>Page generated: Dec 25, 2019 5:27:04 PM MSK</span>
        <Link>REST API</Link>
        <Link>Jenkins ver. 2.210</Link>
      </PageFooter>

      <Shelf>
        <DownloadItem $hover>
          <DownloadIcon>
            <svg width="16" height="18" viewBox="0 0 16 18">
              <path d="M8 1l3 3-3 3-3-3z" fill="#d9705f" />
              <path d="M1 9l3-3 3 3-3 3z" fill="#6f8fc9" />
              <path d="M15 9l-3-3-3 3 3 3z" fill="#8fbf5f" />
              <path d="M8 17l3-3-3-3-3 3z" fill="#d9c25f" />
            </svg>
          </DownloadIcon>
          Git-2.24.1.2-64-bit.exe
          <Chevron>
            <FiChevronUp size={18} />
          </Chevron>
        </DownloadItem>
        <DownloadItem>
          <DownloadIcon>
            <FiFile size={17} strokeWidth={1.2} color="#777" />
          </DownloadIcon>
          jenkins.war
          <Chevron>
            <FiChevronUp size={18} />
          </Chevron>
        </DownloadItem>
        <DownloadItem>
          <DownloadIcon>
            <svg width="16" height="16" viewBox="0 0 16 16">
              <path d="M1 4l7-3 7 3v8l-7 3-7-3z" fill="#7a2a6e" />
              <path d="M1 4l7 3 7-3-7-3z" fill="#d33b3b" />
              <path d="M1 8l7 3v4l-7-3z" fill="#2f6fbd" />
              <path d="M8 11l7-3v4l-7 3z" fill="#3a9a4a" />
            </svg>
          </DownloadIcon>
          jenkins-2.210.zip
          <Chevron>
            <FiChevronUp size={18} />
          </Chevron>
        </DownloadItem>
        <ShelfRight>
          <ShowAll>Show all</ShowAll>
          <ShelfClose>
            <FiX size={16} strokeWidth={3} />
          </ShelfClose>
        </ShelfRight>
      </Shelf>

      <Taskbar>
        <TaskItem $w={54}>
          <svg width="36" height="36" viewBox="0 0 36 36">
            <circle cx="18" cy="18" r="17" fill="#1e5f8e" stroke="#123d5e" />
            <path d="M9 12c3-1 5-1 8 0v6c-3-1-5-1-8 0z" fill="#e2552d" />
            <path d="M19 12c3 1 5 1 8 0v6c-3 1-5 1-8 0z" fill="#7db53b" />
            <path d="M9 20c3-1 5-1 8 0v6c-3-1-5-1-8 0z" fill="#3d9ad8" />
            <path d="M19 20c3 1 5 1 8 0v6c-3 1-5 1-8 0z" fill="#f2c12e" />
          </svg>
        </TaskItem>
        <Gripper $ml={4} />
        <TaskItem $w={68} $ml={4} $pl={3}>
          <svg width="32" height="32" viewBox="0 0 32 32">
            <ellipse cx="16" cy="16" rx="15" ry="7" transform="rotate(-40 16 16)" fill="none" stroke="#f2c12e" strokeWidth="2" />
            <path d="M8 16a8.500 8.500 0 1 1 16.500 3H13a4 4 0 0 0 8 1h3.500A9 9 0 0 1 8 16zm5-2h7a3.500 3.500 0 0 0-7 0z" fill="#2c9ae0" />
          </svg>
        </TaskItem>
        <TaskItem $w={50} $active>
          <svg width="32" height="30" viewBox="0 0 32 30">
            <path d="M2 6h10l2 3h16v19H2z" fill="#edce6f" stroke="#b8954a" />
            <rect x="5" y="2" width="22" height="7" fill="#f6f2df" stroke="#c7b98a" />
            <rect x="11" y="20" width="10" height="9" fill="#7fb0dc" />
          </svg>
        </TaskItem>
        <TaskItem $w={74} $pl={4}>
          <svg width="28" height="30" viewBox="0 0 28 30">
            <rect x="3" y="3" width="20" height="25" rx="2" fill="#a9c9e8" stroke="#7a9cc0" />
            <circle cx="13" cy="15" r="9" fill="#f47b20" />
            <path d="M10 10l8 5-8 5z" fill="#fff" />
          </svg>
        </TaskItem>
        <TaskItem $w={58} $active>
          <svg width="30" height="30" viewBox="0 0 30 30">
            <circle cx="15" cy="15" r="14.500" fill="#db4437" />
            <path d="M15 15 2.400 8.500A14.500 14.500 0 0 0 15 29.500l7-13z" fill="#0f9d58" />
            <path d="M15 8h13a14.500 14.500 0 0 1-13 21.500l7-13z" fill="#fbc02d" />
            <circle cx="15" cy="15" r="7" fill="#fff" />
            <circle cx="15" cy="15" r="5.500" fill="#4285f4" />
          </svg>
        </TaskItem>
        <TaskItem $w={64}>
          <OfficeIcon $a="#33c481" $b="#107c41">
            <OfficeText $bg="#185c37">X</OfficeText>
          </OfficeIcon>
        </TaskItem>
        <TaskItem $w={62}>
          <OfficeIcon $a="#41a5ee" $b="#185abd">
            <OfficeText $bg="#103f91">W</OfficeText>
          </OfficeIcon>
        </TaskItem>
        <TaskItem $w={58} $ml={2} $active>
          <SiXampp size={30} color="#fb7a24" />
        </TaskItem>
        <TaskItem $w={54} $ml={4} $active>
          <PyCharmBadge>
            PC
          </PyCharmBadge>
        </TaskItem>
        <TaskItem $w={53} $ml={8} $active>
          <CmdBadge>C:\_</CmdBadge>
        </TaskItem>
        <TaskItem $w={53} $ml={9} $active>
          <svg width="30" height="30" viewBox="0 0 30 30">
            <path d="M2 17C2 8 12 5 19 8c7 3 8 10 3 13-4 2-5 0-8 2-3 3-12 2-12-6z" fill="#dfe7ee" stroke="#90a4b8" />
            <circle cx="8" cy="15" r="2" fill="#d33" />
            <circle cx="12" cy="10" r="2" fill="#3a9a4a" />
            <circle cx="18" cy="11" r="2" fill="#f2c12e" />
            <path d="M16 20 28 3" stroke="#b5803a" strokeWidth="3" />
          </svg>
        </TaskItem>
        <Tray>
          <Gripper $ml={0} />
          <TrayLang>EN</TrayLang>
          <TrayIcon>
            <svg width="8" height="5" viewBox="0 0 8 5">
              <path d="M4 0l4 5H0z" fill="#fff" />
            </svg>
          </TrayIcon>
          <TrayIcon>
            <svg width="16" height="16" viewBox="0 0 16 16">
              <path d="M1 5h3l4-4v14l-4-4H1z" fill="#e8eef5" stroke="#3a4a5a" strokeWidth=".7" />
              <path d="M10 5c1 2 1 4 0 6M12 3c2 3 2 7 0 10" stroke="#fff" fill="none" />
            </svg>
          </TrayIcon>
          <TrayIcon>
            <svg width="16" height="14" viewBox="0 0 16 14">
              <path d="M1 11h2v2H1zM4.500 9h2v4h-2zM8 6h2v7H8zM11.500 2h3v11h-3z" fill="#fff" stroke="#3a4a5a" strokeWidth=".5" />
            </svg>
          </TrayIcon>
          <TrayIcon>
            <svg width="16" height="18" viewBox="0 0 16 18">
              <path d="M2 1v16M2 2h10l-2 3 2 3H2" fill="#e8eef5" stroke="#fff" />
              <circle cx="11" cy="13" r="4.500" fill="#e02b2b" />
              <path d="M9 11l4 4M13 11l-4 4" stroke="#fff" />
            </svg>
          </TrayIcon>
          <Clock>
            17:27
            <br />
            12/25/2019
          </Clock>
          <ShowDesktop />
        </Tray>
      </Taskbar>
    </Screen>
  );
}
